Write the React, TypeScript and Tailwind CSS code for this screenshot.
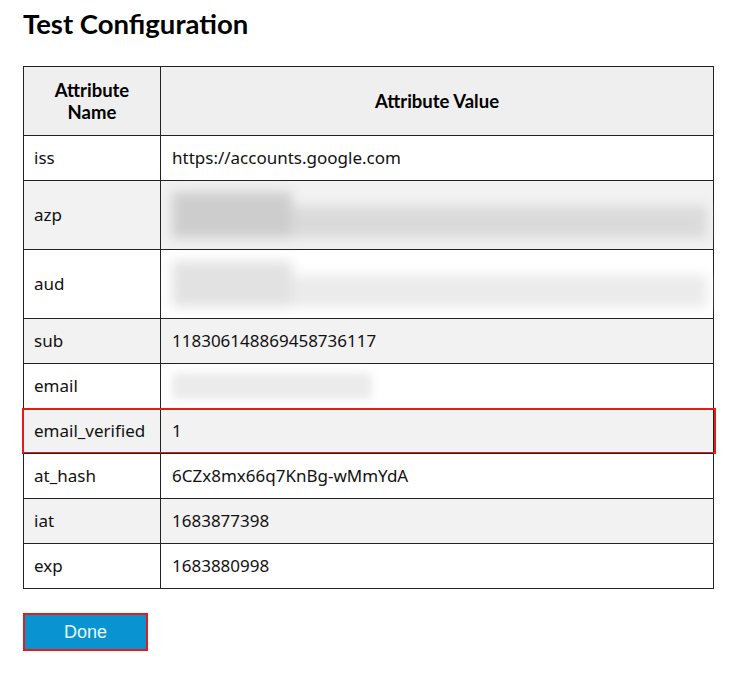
import React from "react";

type Row = {
  name: string;
  value?: string;
  blur?: "azp" | "aud" | "email";
  gray?: boolean;
  tall?: boolean;
  marked?: boolean;
};

const rows: Row[] = [
  { name: "iss", value: "https://accounts.google.com" },
  { name: "azp", blur: "azp", gray: true, tall: true },
  { name: "aud", blur: "aud", tall: true },
  { name: "sub", value: "118306148869458736117", gray: true },
  { name: "email", blur: "email" },
  { name: "email_verified", value: "1", gray: true, marked: true },
  { name: "at_hash", value: "6CZx8mx66q7KnBg-wMmYdA" },
  { name: "iat", value: "1683877398", gray: true },
  { name: "exp", value: "1683880998" },
];

const Blurred = ({ kind }: { kind: "azp" | "aud" | "email" }) => {
  if (kind === "email") {
    return <div className="h-[26px] w-[200px] rounded-sm bg-[#ebebeb] blur-[4px]" />;
  }
  const dark = kind === "azp";
  return (
    <div className="flex w-full items-end blur-[6px]">
      <div className={`h-[46px] w-[120px] ${dark ? "bg-[#cdcdcd]" : "bg-[#e2e2e2]"}`} />
      <div className={`h-[32px] flex-1 ${dark ? "bg-[#dadada]" : "bg-[#ebebeb]"}`} />
    </div>
  );
};

export default function App() {
  return (
    <div
      className="min-h-[674px] w-[730px] bg-white pl-[23px] pt-[5px] text-[#111]"
      style={{ fontFamily: '"Noto Sans", "Open Sans", sans-serif' }}
    >
      <h1
        className="text-[27.5px] font-bold leading-[38px] text-black"
        style={{ fontFamily: 'Lato, "Open Sans", sans-serif' }}
      >
        Test Configuration
      </h1>

      <div className="mt-[23px] w-[691px] border border-[#222]">
        <div
          className="flex h-[68px] bg-[#efefef] text-[18.5px] font-bold leading-[22px] text-black"
          style={{ fontFamily: 'Lato, "Open Sans", sans-serif' }}
        >
          <div className="flex w-[137px] items-center justify-center border-r border-[#222] text-center">
            Attribute
            <br />
            Name
          </div>
          <div className="flex flex-1 items-center justify-center">Attribute Value</div>
        </div>

        {rows.map((r) => (
          <div
            key={r.name}
            className={`relative flex border-t border-[#222] text-[17px] ${r.tall ? "h-[69px]" : "h-[45px]"} ${
              r.gray ? "bg-[#f2f2f2]" : "bg-white"
            }`}
          >
            <div className="flex w-[137px] items-center border-r border-[#222] pl-[10px]">{r.name}</div>
            <div className="flex flex-1 items-center pl-[11px] pr-[6px]">
              {r.blur ? <Blurred kind={r.blur} /> : r.value}
            </div>
            {r.marked && (
              <div className="pointer-events-none absolute -bottom-[1px] -left-[2px] -right-[3px] -top-[1px] border-2 border-[#e31b1b]" />
            )}
          </div>
        ))}
      </div>

      <div className="mt-[24px] inline-block border-2 border-[#e31b1b]">
        <button
          className="flex h-[34px] w-[121px] items-center justify-center bg-[#0994d1] text-[18px] text-[#e6fbff]"
          style={{ fontFamily: '"Liberation Sans", Arial, sans-serif' }}
        >
          Done
        </button>
      </div>
    </div>
  );
}
